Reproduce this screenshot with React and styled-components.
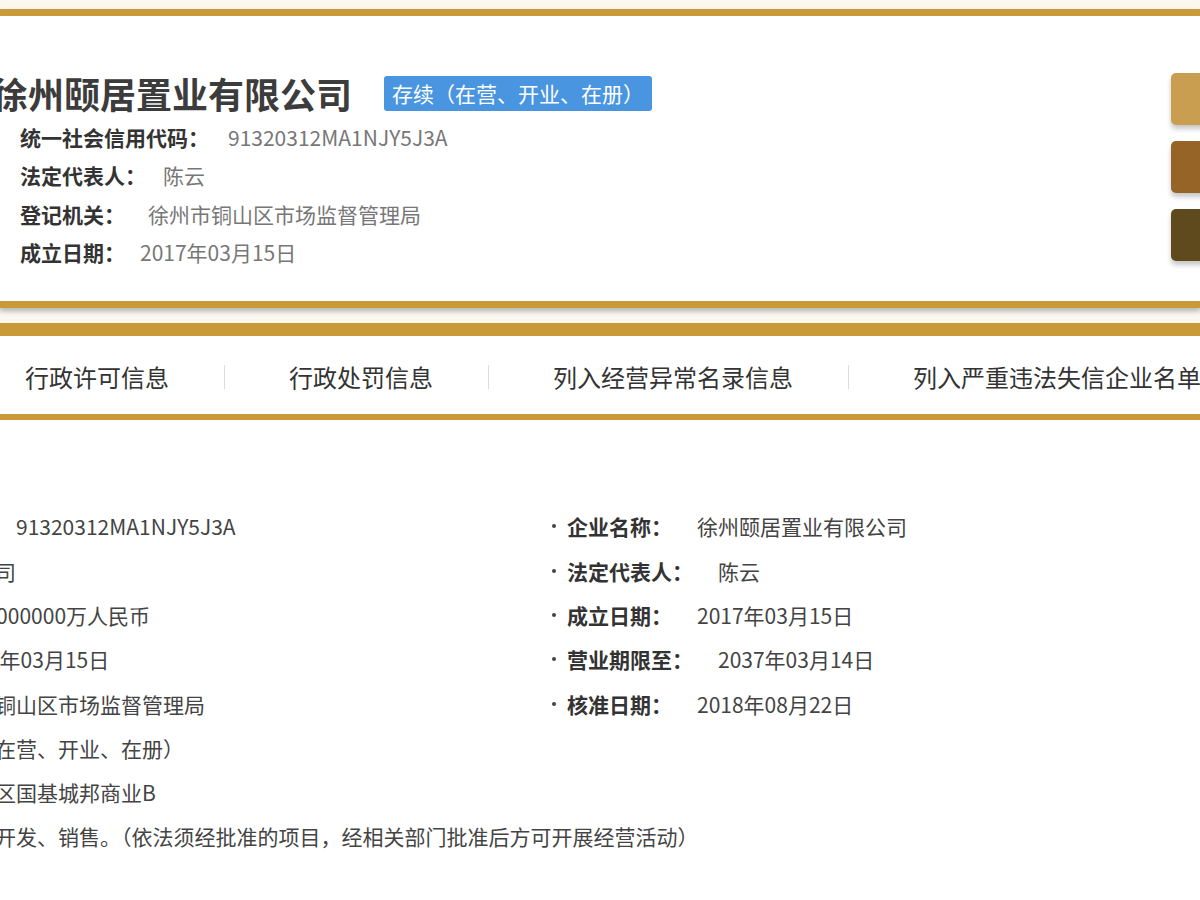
import React from "react";
import styled, { createGlobalStyle } from "styled-components";

const GOLD = "#c99a38";
const FONT = `"Noto Sans CJK SC", "Noto Sans", sans-serif`;

const Global = createGlobalStyle`
  html, body { margin: 0; padding: 0; background: #fff; }
  body { overflow: hidden; width: 1200px; height: 900px; font-family: ${FONT}; }
  * { box-sizing: border-box; }
`;

const Page = styled.div`
  width: 1200px;
  height: 900px;
  overflow: hidden;
  background: #fff;
`;

const TopStrip = styled.div`
  height: 9px;
  background: #fbf8ef;
`;

const HeaderCard = styled.section`
  position: relative;
  display: flex;
  justify-content: space-between;
  align-items: flex-start;
  border-top: 7px solid ${GOLD};
  border-bottom: 7px solid ${GOLD};
  background: #fff;
  padding: 57px 0 30px 20px;
  box-shadow: 0 3px 5px rgba(0, 0, 0, 0.22);
  z-index: 1;
`;

const InfoBlock = styled.div`
  display: flex;
  flex-direction: column;
`;

const TitleRow = styled.div`
  display: flex;
  align-items: center;
  margin-left: -28px;
  height: 40px;
  margin-bottom: 5px;
`;

const Title = styled.h1`
  margin: 0;
  font-size: 36px;
  line-height: 40px;
  font-weight: 700;
  color: #3c3c3c;
  white-space: nowrap;
`;

const Badge = styled.span`
  margin-left: 32px;
  height: 35px;
  padding: 0 8px;
  display: inline-flex;
  align-items: center;
  background: #4a95e0;
  color: #fff;
  font-size: 21px;
  border-radius: 3px;
  white-space: nowrap;
`;

const InfoRow = styled.div`
  display: flex;
  align-items: center;
  height: 38.3px;
  font-size: 21px;
  white-space: nowrap;
`;

const InfoLabel = styled.span`
  font-weight: 700;
  color: #333;
`;

const InfoValue = styled.span`
  color: #777;
  margin-left: ${(p) => p.$gap}px;
`;

const ActionColumn = styled.div`
  display: flex;
  flex-direction: column;
  gap: 16px;
  margin-right: -31px;
`;

const ActionButton = styled.div`
  width: 60px;
  height: 52px;
  border-radius: 5px;
  background: ${(p) => p.$color};
  box-shadow: 0 4px 5px rgba(0, 0, 0, 0.22);
`;

const Gap = styled.div`
  height: 15px;
  background: linear-gradient(#e9e7e2, #f9f7f0 45%, #fbf8ef);
`;

const TabBar = styled.nav`
  display: flex;
  align-items: center;
  height: 97px;
  padding-top: 3px;
  border-top: 13px solid ${GOLD};
  border-bottom: 6px solid ${GOLD};
  background: #fff;
  white-space: nowrap;
`;

const Tab = styled.span`
  font-size: 24px;
  color: #333;
  padding: 0 55px 0 ${(p) => (p.$first ? 25 : 64)}px;
  flex-shrink: 0;
`;

const TabSep = styled.span`
  width: 1px;
  height: 24px;
  background: #dcdcdc;
  flex-shrink: 0;
`;

const Details = styled.section`
  display: flex;
  padding-top: 84px;
  margin-left: -213px;
`;

const DetailColumn = styled.div`
  width: ${(p) => p.$width}px;
  flex-shrink: 0;
  display: flex;
  flex-direction: column;
`;

const DetailRow = styled.div`
  display: flex;
  align-items: center;
  height: 44.3px;
  font-size: 21px;
  white-space: nowrap;
`;

const Bullet = styled.span`
  width: 4px;
  height: 4px;
  border-radius: 50%;
  background: #444;
  margin-right: 11px;
  flex-shrink: 0;
`;

const DetailLabel = styled.span`
  font-weight: 700;
  color: #333;
`;

const DetailValue = styled.span`
  color: #444;
  margin-left: 25px;
`;

const headerRows = [
  ["统一社会信用代码：", "91320312MA1NJY5J3A", 19],
  ["法定代表人：", "陈云", 17],
  ["登记机关：", "徐州市铜山区市场监督管理局", 23],
  ["成立日期：", "2017年03月15日", 15],
];

const tabs = ["行政许可信息", "行政处罚信息", "列入经营异常名录信息", "列入严重违法失信企业名单（黑名单）信息"];

const leftRows = [
  ["统一社会信用代码：", "91320312MA1NJY5J3A"],
  ["类型：", "有限责任公司"],
  ["注册资本：", "10000.000000万人民币"],
  ["营业期限自：", "2017年03月15日"],
  ["登记机关：", "徐州市铜山区市场监督管理局"],
  ["登记状态：", "存续（在营、开业、在册）"],
  ["住所：", "徐州市铜山区国基城邦商业B"],
  ["经营范围：", "房地产开发、销售。（依法须经批准的项目，经相关部门批准后方可开展经营活动）"],
];

const rightRows = [
  ["企业名称：", "徐州颐居置业有限公司"],
  ["法定代表人：", "陈云"],
  ["成立日期：", "2017年03月15日"],
  ["营业期限至：", "2037年03月14日"],
  ["核准日期：", "2018年08月22日"],
];

export default function App() {
  return (
    <Page>
      <Global />
      <TopStrip />
      <HeaderCard>
        <InfoBlock>
          <TitleRow>
            <Title>徐州颐居置业有限公司</Title>
            <Badge>存续（在营、开业、在册）</Badge>
          </TitleRow>
          {headerRows.map(([label, value, gap]) => (
            <InfoRow key={label}>
              <InfoLabel>{label}</InfoLabel>
              <InfoValue $gap={gap}>{value}</InfoValue>
            </InfoRow>
          ))}
        </InfoBlock>
        <ActionColumn>
          <ActionButton $color="#c99e50" />
          <ActionButton $color="#976428" />
          <ActionButton $color="#5f4a1e" />
        </ActionColumn>
      </HeaderCard>
      <Gap />
      <TabBar>
        {tabs.map((t, i) => (
          <React.Fragment key={t}>
            {i > 0 && <TabSep />}
            <Tab $first={i === 0}>{t}</Tab>
          </React.Fragment>
        ))}
      </TabBar>
      <Details>
        <DetailColumn $width={765}>
          {leftRows.map(([label, value]) => (
            <DetailRow key={label}>
              <Bullet />
              <DetailLabel>{label}</DetailLabel>
              <DetailValue>{value}</DetailValue>
            </DetailRow>
          ))}
        </DetailColumn>
        <DetailColumn $width={640}>
          {rightRows.map(([label, value]) => (
            <DetailRow key={label}>
              <Bullet />
              <DetailLabel>{label}</DetailLabel>
              <DetailValue>{value}</DetailValue>
            </DetailRow>
          ))}
        </DetailColumn>
      </Details>
    </Page>
  );
}
